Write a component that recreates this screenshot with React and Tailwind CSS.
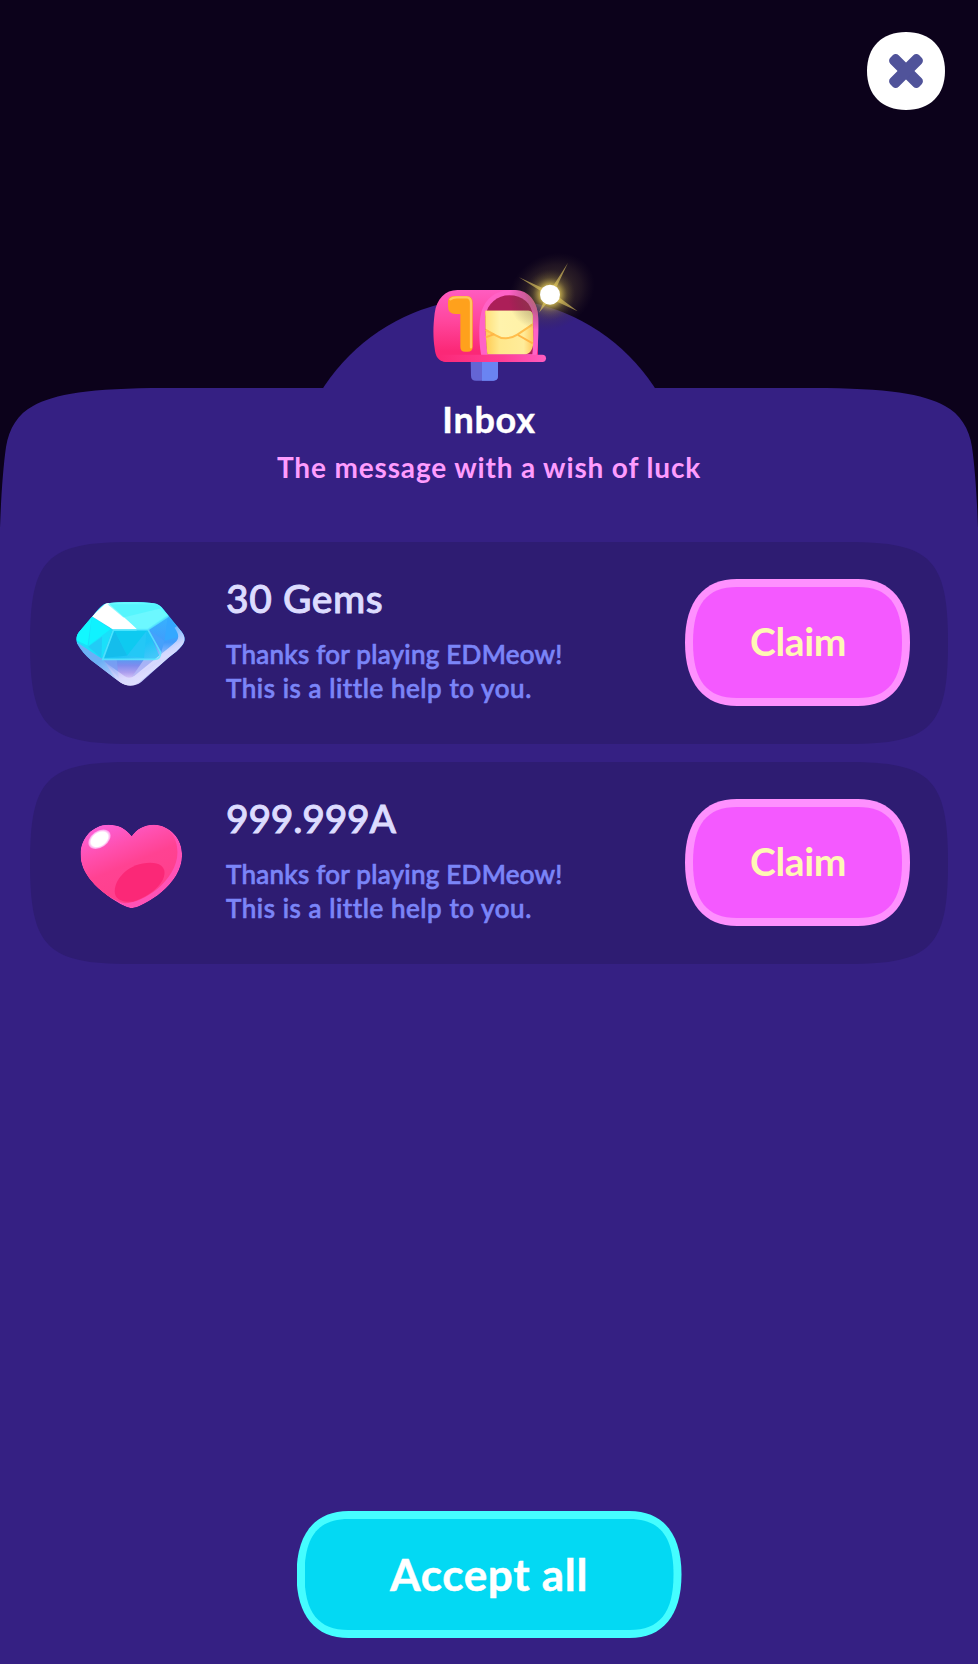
import React from "react";

function MailboxArt() {
  return (
    <svg viewBox="0 0 600 480" className="absolute -top-[58px] left-[88px] h-[160px] w-[200px]" aria-hidden="true">
      <defs>
        <linearGradient id="mbBody" x1="0" y1="0" x2="0" y2="1">
          <stop offset="0" stopColor="#ff5cc0" />
          <stop offset="0.45" stopColor="#ff459c" />
          <stop offset="0.85" stopColor="#fb2877" />
          <stop offset="1" stopColor="#fb2877" />
        </linearGradient>
        <linearGradient id="mbShelf" x1="0" y1="0" x2="1" y2="0">
          <stop offset="0" stopColor="#fb2877" />
          <stop offset="0.6" stopColor="#ff3f96" />
          <stop offset="1" stopColor="#ff5cc0" />
        </linearGradient>
        <linearGradient id="mbMail" x1="0" y1="0" x2="1" y2="0">
          <stop offset="0" stopColor="#ffcb52" />
          <stop offset="0.3" stopColor="#ffe88c" />
          <stop offset="0.8" stopColor="#ffec9a" />
          <stop offset="1" stopColor="#ffc95c" />
        </linearGradient>
        <linearGradient id="mbFlap" x1="0" y1="0" x2="1" y2="0">
          <stop offset="0" stopColor="#ffe07a" />
          <stop offset="0.3" stopColor="#fff3ac" />
          <stop offset="1" stopColor="#fff1a6" />
        </linearGradient>
        <radialGradient id="mbGlow">
          <stop offset="0" stopColor="#fff27a" stopOpacity="1" />
          <stop offset="0.42" stopColor="#e8cf58" stopOpacity="0.65" />
          <stop offset="0.68" stopColor="#a08c40" stopOpacity="0.25" />
          <stop offset="1" stopColor="#5a4a30" stopOpacity="0" />
        </radialGradient>
        <radialGradient id="mbHaze">
          <stop offset="0" stopColor="#8a7740" stopOpacity="0.6" />
          <stop offset="0.7" stopColor="#5a4838" stopOpacity="0.25" />
          <stop offset="1" stopColor="#3a2c30" stopOpacity="0" />
        </radialGradient>
      </defs>
      <path d="M212 350H294V408Q294 422 280 422H228Q213 422 213 407Z" fill="#6465d4" />
      <path d="M246 350H294V408Q294 422 280 422H246Z" fill="#6a84f2" />
      <path d="M172 150H345C385 150 414 185 414 232V365H136C116 365 106 350 104 325C99 295 99 260 104 220C110 176 136 150 172 150Z" fill="url(#mbBody)" />
      <path d="M243 343C236 300 236 250 243 222C252 180 285 150 332 150C380 150 414 182 415 235C416 280 414 320 410 348H245Z" fill="#ff62c6" />
      <path d="M262 343C258 300 256 260 256 230C262 190 292 166 328 166C368 166 394 190 398 225C401 270 400 310 397 343Z" fill="#ac1f58" />
      <path d="M256 212H385Q398 212 399 228L400 305Q399 343 370 343H262C258 310 256 260 256 212Z" fill="url(#mbMail)" />
      <path d="M257 212H385Q397 212 398 228L397 250L352 283C330 298 305 298 287 284L257 266Z" fill="url(#mbFlap)" />
      <path d="M257 270L287 286C305 298 330 298 352 284L397 254" fill="none" stroke="#ffbe4c" strokeWidth="6" />
      <path d="M257 292L283 282M354 285L398 310" fill="none" stroke="#ffb545" strokeWidth="6" />
      <path d="M120 344H427Q438 344 438 355Q438 366 427 366H136Q122 364 115 350Z" fill="url(#mbShelf)" />
      <path d="M162 168H200Q218 168 218 188V320Q218 335 203 335H195Q181 335 181 320V222H166Q144 222 144 198V186Q144 168 162 168Z" fill="#ffa11c" />
      <path d="M151 178Q158 172 170 172H200Q213 173 213 188V322" fill="none" stroke="#ffc85c" strokeWidth="7" strokeLinecap="round" />
      <ellipse cx="455" cy="155" rx="135" ry="110" fill="url(#mbHaze)" transform="rotate(-30 455 155)" />
      <circle cx="450" cy="164" r="76" fill="url(#mbGlow)" />
      <path d="M357 112L449 154L504 68L461 160L533 214L452 176L417 218L440 164Z" fill="#e9cf62" fillOpacity="0.6" />
      <circle cx="450" cy="164" r="30" fill="#fff" />
    </svg>
  );
}

function GemArt() {
  return (
    <svg viewBox="168 215 327 253" className="relative top-px h-[84px] w-[109px] shrink-0" aria-hidden="true">
      <defs>
        <clipPath id="gemShape">
          <path d="M262 219C300 214 365 214 402 219C415 221 424 228 432 238L485 304C497 320 498 332 486 347C478 358 462 371 445 384L364 456C344 471 320 471 300 457L226 400C206 386 192 371 180 355C166 337 165 322 176 306L222 252C236 235 245 222 262 219Z" />
        </clipPath>
        <linearGradient id="gemBase" x1="0" y1="0" x2="0" y2="1">
          <stop offset="0.5" stopColor="#28bdf6" />
          <stop offset="0.75" stopColor="#8fa8f0" />
          <stop offset="1" stopColor="#dfd8ff" />
        </linearGradient>
        <linearGradient id="gemLow" x1="0" y1="0" x2="0" y2="1">
          <stop offset="0" stopColor="#5a9af2" />
          <stop offset="0.3" stopColor="#7e8cee" />
          <stop offset="0.65" stopColor="#ab9eee" />
          <stop offset="1" stopColor="#dccbfa" />
        </linearGradient>
        <linearGradient id="gemRight" x1="0" y1="0" x2="0" y2="1">
          <stop offset="0" stopColor="#36b3ff" />
          <stop offset="0.6" stopColor="#419cfb" />
          <stop offset="1" stopColor="#b5c9ff" />
        </linearGradient>
        <linearGradient id="gemMid" x1="0" y1="0" x2="1" y2="1">
          <stop offset="0" stopColor="#0cd0f2" />
          <stop offset="0.6" stopColor="#1fc4f6" />
          <stop offset="1" stopColor="#52c8fb" />
        </linearGradient>
        <linearGradient id="gemRim" x1="0" y1="0" x2="1" y2="1">
          <stop offset="0.35" stopColor="#cfd4ff" stopOpacity="0" />
          <stop offset="0.65" stopColor="#dcdcff" stopOpacity="0.9" />
          <stop offset="1" stopColor="#ecebff" />
        </linearGradient>
      </defs>
      <g clipPath="url(#gemShape)">
        <path d="M160 210H500V475H160Z" fill="url(#gemBase)" />
        <path d="M215 258L278 298L246 386L168 340V300Z" fill="#1ae0fa" />
        <path d="M215 258L202 346L168 330V300Z" fill="#12f8ff" />
        <path d="M246 320L204 350L244 384Z" fill="#22ccf6" />
        <path d="M215 258L272 296L206 346Z" fill="#10f2ff" />
        <path d="M168 335L248 388L296 458L210 402Z" fill="#6cb0f6" />
        <path d="M278 298H384L424 390H246Z" fill="url(#gemMid)" />
        <path d="M284 302L322 376L248 384Z" fill="#14bdec" />
        <path d="M284 302H380L322 376Z" fill="#0ecaf0" />
        <path d="M380 302L322 376L372 384Z" fill="#24c8f6" />
        <path d="M384 298L444 256L500 320V350L424 390Z" fill="url(#gemRight)" />
        <path d="M384 298L424 366L434 332Z" fill="#46a0fb" />
        <path d="M444 256L434 332L472 322L478 300Z" fill="#34a8ff" />
        <path d="M250 388H424L356 448H302Z" fill="url(#gemLow)" />
        <path d="M250 388L296 444L290 388Z" fill="#78a4f4" fillOpacity="0.7" />
        <path d="M372 388H424L336 440Z" fill="#b4bcf8" fillOpacity="0.8" />
        <path
          d="M474 286C488 306 492 328 478 342C462 358 442 372 428 384L352 446C338 456 320 458 306 448L226 390"
          fill="none"
          stroke="url(#gemRim)"
          strokeWidth="24"
        />
        <path d="M222 250L262 212H410L446 256L384 298H278Z" fill="#60faff" />
        <path d="M215 258L262 215L290 232L352 297H278Z" fill="#fff" />
        <path d="M262 216L352 297L384 296L440 254L404 222Z" fill="#6cf8ff" />
        <path d="M262 222L410 222L424 234L310 262Z" fill="#48f4fb" fillOpacity="0.6" />
        <path d="M446 257L384 298H350M384 298L422 366Q424 386 404 388H248L280 300H350" fill="none" stroke="#5aeaff" strokeWidth="5" strokeOpacity="0.8" />
      </g>
    </svg>
  );
}

function HeartArt() {
  const shape =
    "M336 258C352 234 378 222 404 223C452 225 488 264 488 314C488 358 462 396 424 428C398 450 366 466 350 472C338 476 328 475 316 469C282 453 240 424 214 392C194 367 182 342 182 312C182 264 218 223 266 223C296 223 318 234 336 258Z";
  return (
    <svg viewBox="178 221 309 253" className="relative top-[3px] h-[84px] w-[103px] shrink-0 overflow-visible" aria-hidden="true">
      <defs>
        <clipPath id="heartShape">
          <path d={shape} />
        </clipPath>
        <linearGradient id="heartFill" x1="0.15" y1="0" x2="0.6" y2="0.9">
          <stop offset="0" stopColor="#fc62dc" />
          <stop offset="0.35" stopColor="#ff4fae" />
          <stop offset="0.6" stopColor="#ff4292" />
          <stop offset="1" stopColor="#ff3f8c" />
        </linearGradient>
        <radialGradient id="heartShine">
          <stop offset="0.75" stopColor="#fff" />
          <stop offset="1" stopColor="#ffc4ff" stopOpacity="0.6" />
        </radialGradient>
      </defs>
      <g clipPath="url(#heartShape)">
        <path d={shape} fill="#ff52b6" />
        <path d="M336 258C352 234 378 222 404 223C446 225 474 258 474 306C474 350 446 388 414 416C380 444 345 458 316 460C282 453 240 424 214 392C194 367 182 342 182 312C182 264 218 223 266 223C296 223 318 234 336 258Z" fill="url(#heartFill)" />
        <path d="M285 424C285 384 330 338 392 338C420 338 435 350 435 368C435 400 394 438 340 455C306 458 285 446 285 424Z" fill="#fb2877" />
      </g>
      <ellipse cx="239" cy="267" rx="37" ry="25" fill="url(#heartShine)" transform="rotate(-35 239 267)" />
    </svg>
  );
}

function CloseButton() {
  return (
    <button
      type="button"
      aria-label="Close"
      className="flex h-[78px] w-[78px] items-center justify-center bg-white [clip-path:path('M0_39C0_15_15_0_39_0C63_0_78_15_78_39C78_63_63_78_39_78C15_78_0_63_0_39Z')]"
    >
      <svg viewBox="-17 -17 34 34" className="h-[34px] w-[34px] overflow-visible" fill="#50539a" aria-hidden="true">
        <rect x="-20.5" y="-5.9" width="41" height="11.8" rx="4.2" transform="rotate(45)" />
        <rect x="-20.5" y="-5.9" width="41" height="11.8" rx="4.2" transform="rotate(-45)" />
      </svg>
    </button>
  );
}

function ClaimButton() {
  return (
    <button
      type="button"
      className="mb-px flex h-[127px] w-[225px] shrink-0 items-center justify-center bg-[#fe90fe] [clip-path:path('M0_63.5C0_22_19_0_52_0H173C206_0_225_22_225_63.5C225_105_206_127_173_127H52C19_127_0_105_0_63.5Z')]"
    >
      <span className="flex h-[111px] w-[209px] items-center justify-center bg-[#f459ff] [clip-path:path('M0_55.5C0_17_14_0_44_0H165C195_0_209_17_209_55.5C209_94_195_111_165_111H44C14_111_0_94_0_55.5Z')]">
        <span className="pb-[3px] pl-px text-[39px] leading-none font-bold tracking-[-0.4px] text-[#fff8b5]">Claim</span>
      </span>
    </button>
  );
}

function RewardCard({ art, title, titleClass }) {
  return (
    <li className="flex h-[202px] items-center bg-[#2e1c72] pr-[38px] pl-[46px] [clip-path:path('M0_101C0_17_17_0_100_0H818C901_0_918_17_918_101C918_185_901_202_818_202H100C17_202_0_185_0_101Z')]">
      <div className="flex w-[109px] justify-center">{art}</div>
      <div className="ml-[41px] flex-1 pb-[7px]">
        <h2 className={titleClass}>{title}</h2>
        <p className="mt-4 text-[26px] leading-[34px] font-medium whitespace-nowrap text-[#7b85f8] [-webkit-text-stroke:0.7px_#7b85f8]">
          <span className="block tracking-[0.25px]">Thanks for playing EDMeow!</span>
          <span className="block tracking-[0.55px]">This is a little help to you.</span>
        </p>
      </div>
      <ClaimButton />
    </li>
  );
}

export default function App() {
  return (
    <div className="flex h-[1664px] w-[978px] flex-col overflow-hidden bg-[#0c021b] font-['Lato','Open_Sans',sans-serif]">
      <header className="flex h-[298px] shrink-0 justify-end pt-8 pr-[33px]">
        <CloseButton />
      </header>

      <div className="relative z-10 mx-auto h-[91px] w-[354px] shrink-0">
        <div className="h-full w-full bg-[#352083] [clip-path:circle(198px_at_177px_198px)]" />
        <MailboxArt />
      </div>

      <main className="-mt-px flex flex-1 flex-col bg-[#352083] px-[30px] pb-[26px] [clip-path:path('M0_140C1_110_3_80_6_59C9_40_18_26_33_18C54_6_90_0_165_0H813C888_0_924_6_945_18C960_26_969_40_972_59C975_80_977_110_978_140V1276H0Z')]">
        <div className="flex h-[154px] flex-col items-center pt-[13px]">
          <h1 className="text-[36px] leading-[36px] font-bold tracking-[0.7px] text-white [-webkit-text-stroke:0.4px_#fff]">Inbox</h1>
          <p className="mt-[12px] text-[28px] leading-[36px] font-bold tracking-[0.85px] whitespace-nowrap text-[#fe9cfe]">
            The message with a wish of luck
          </p>
        </div>

        <ul className="flex flex-col gap-[18px]">
          <RewardCard
            art={<GemArt />}
            title="30 Gems"
            titleClass="text-[39px] leading-[46px] font-medium tracking-[0.6px] text-[#dddcff] [-webkit-text-stroke:0.9px_#dddcff]"
          />
          <RewardCard
            art={<HeartArt />}
            title="999.999A"
            titleClass="text-[39px] leading-[46px] font-medium tracking-[-0.2px] text-[#dddcff] [-webkit-text-stroke:0.9px_#dddcff]"
          />
        </ul>

        <button
          type="button"
          className="mx-auto mt-auto flex h-[127px] w-[385px] items-center justify-center bg-[#45fdff] [clip-path:path('M0_63.5C0_22_19_0_52_0H333C366_0_385_22_385_63.5C385_105_366_127_333_127H52C19_127_0_105_0_63.5Z')]"
        >
          <span className="flex h-[111px] w-[369px] items-center justify-center bg-[#03d9f3] [clip-path:path('M0_55.5C0_17_14_0_44_0H325C355_0_369_17_369_55.5C369_94_355_111_325_111H44C14_111_0_94_0_55.5Z')]">
            <span className="pb-[2px] text-[44px] leading-none font-bold tracking-[0.7px] text-white [-webkit-text-stroke:0.5px_#fff]">Accept all</span>
          </span>
        </button>
      </main>
    </div>
  );
}
